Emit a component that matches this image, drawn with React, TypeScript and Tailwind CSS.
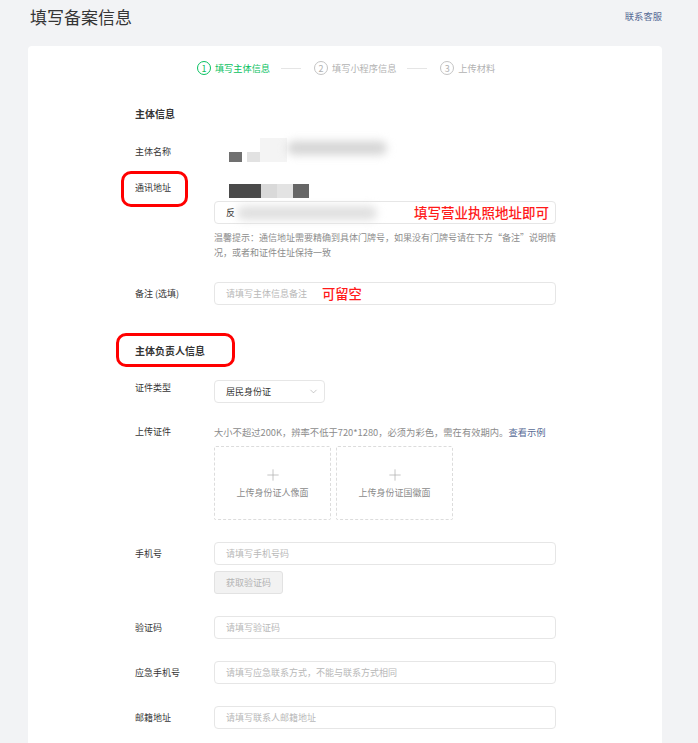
import { ChevronDown, Plus } from 'lucide-react';

const font = "font-['Noto_Sans_CJK_SC','Noto_Sans',sans-serif]";

function Step({ n, label, active }: { n: number; label: string; active?: boolean }) {
    return (
        <div className="flex items-center gap-[4px]">
            <span
                className={`flex h-[14px] w-[14px] items-center justify-center rounded-full border text-[9px] leading-none ${
                    active ? 'border-[#07c160] text-[#07c160]' : 'border-[#c4c4c4] text-[#b2b2b2]'
                }`}
            >
                {n}
            </span>
            <span className={`text-[9.2px] leading-[14px] ${active ? 'text-[#07c160]' : 'text-[#b2b2b2]'}`}>{label}</span>
        </div>
    );
}

function Input({ placeholder, children }: { placeholder?: string; children?: React.ReactNode }) {
    return (
        <div className="relative flex h-[23px] w-[342px] items-center rounded-[4px] border border-[#e6e6e6] bg-white pl-[11px]">
            {placeholder && <span className="text-[9px] text-[#b8b8b8]">{placeholder}</span>}
            {children}
        </div>
    );
}

function Row({ label, placeholder, className = 'mt-[22px]' }: { label: string; placeholder: string; className?: string }) {
    return (
        <div className={`flex items-center ${className}`}>
            <div className="w-[79px] text-[9px] leading-[14px] text-[#353535]">{label}</div>
            <Input placeholder={placeholder} />
        </div>
    );
}

function UploadBox({ text }: { text: string }) {
    return (
        <div className="flex h-[74px] w-[117px] flex-col items-center justify-center rounded-[2px] border border-dashed border-[#dcdcdc]">
            <Plus size={18} strokeWidth={1} className="text-[#b0b0b0]" />
            <span className="mt-[2px] text-[9px] text-[#8a8a8a]">{text}</span>
        </div>
    );
}

export default function App() {
    return (
        <div className={`min-h-[743px] w-[698px] overflow-hidden bg-[#f2f3f5] ${font}`}>
            <div className="flex h-[33px] items-center justify-between pl-[30px] pr-[36px]">
                <h1 className="text-[17px] leading-[22px] text-[#353535]">填写备案信息</h1>
                <span className="text-[9.3px] text-[#576b95]">联系客服</span>
            </div>

            <div className="ml-[28px] mt-[13px] w-[634px] rounded-[4px] bg-white pb-[40px] pt-[15px]">
                <div className="flex items-center justify-center pl-[2px]">
                    <Step n={1} label="填写主体信息" active />
                    <div className="ml-[11px] mr-[13px] h-px w-[20px] bg-[#e5e5e5]" />
                    <Step n={2} label="填写小程序信息" />
                    <div className="ml-[11px] mr-[13px] h-px w-[20px] bg-[#e5e5e5]" />
                    <Step n={3} label="上传材料" />
                </div>

                <div className="pl-[107px]">
                    <h3 className="mt-[32px] text-[10px] font-bold leading-[14px] text-[#353535]">主体信息</h3>

                    <div className="mt-[24px] flex items-start">
                        <div className="w-[79px] text-[9px] leading-[14px] text-[#353535]">主体名称</div>
                        <div className="relative h-[14px] w-[200px]">
                            <div className="absolute left-[15px] top-[7px] h-[10px] w-[13px] bg-[#707070]" />
                            <div className="absolute left-[33px] top-[7px] h-[10px] w-[13px] bg-[#e2e2e2]" />
                            <div className="absolute left-[46px] top-[-7px] h-[24px] w-[27px] bg-[#f4f4f4]" />
                            <div className="absolute left-[73px] top-[-4px] h-[14px] w-[100px] rounded-full bg-[#d6d6d6] blur-[4px]" />
                        </div>
                    </div>

                    <div className="mt-[22px] flex items-start">
                        <div className="relative w-[79px] text-[9px] leading-[14px] text-[#353535]">
                            通讯地址
                            <div className="absolute left-[-14px] top-[-10px] h-[36px] w-[67px] rounded-[10px] border-[3px] border-[#ff0000]" />
                        </div>
                        <div className="flex flex-col">
                            <div className="ml-[15px] mt-[3px] flex h-[14px]">
                                <div className="w-[32px] bg-[#4a4a4a]" />
                                <div className="w-[16px] bg-[#d9d9d9]" />
                                <div className="w-[16px] bg-[#e3e3e3]" />
                                <div className="w-[16px] bg-[#666666]" />
                            </div>
                            <div className="mt-[3px]">
                                <Input>
                                    <span className="text-[9px] text-[#353535]">反</span>
                                    <div className="ml-[2px] h-[14px] w-[140px] rounded-full bg-[#e0e0e0] blur-[4px]" />
                                    <span className="absolute left-[199px] top-1/2 -translate-y-1/2 text-[13.5px] font-medium leading-none text-[#ff1a1a]">
                                        填写营业执照地址即可
                                    </span>
                                </Input>
                            </div>
                            <p className="mt-[6px] w-[342px] text-[9px] leading-[15px] text-[#8c8c8c]">
                                温馨提示：通信地址需要精确到具体门牌号，如果没有门牌号请在下方“备注”说明情况，或者和证件住址保持一致
                            </p>
                        </div>
                    </div>

                    <div className="mt-[22px] flex items-center">
                        <div className="w-[79px] text-[9px] leading-[14px] text-[#353535]">备注 (选填)</div>
                        <Input placeholder="请填写主体信息备注">
                            <span className="absolute left-[106px] top-1/2 -translate-y-1/2 bg-white px-[1px] text-[13.3px] font-medium leading-none text-[#ff1a1a]">
                                可留空
                            </span>
                        </Input>
                    </div>

                    <h3 className="relative mt-[39px] text-[10px] font-bold leading-[14px] text-[#353535]">
                        主体负责人信息
                        <span className="absolute left-[-19px] top-[-11px] h-[34px] w-[119px] rounded-[10px] border-[3px] border-[#ff0000]" />
                    </h3>

                    <div className="mt-[22px] flex items-start">
                        <div className="w-[79px] pt-[1px] text-[9px] leading-[14px] text-[#353535]">证件类型</div>
                        <div className="flex h-[23px] w-[111px] items-center justify-between rounded-[4px] border border-[#e6e6e6] pl-[11px] pr-[5px]">
                            <span className="text-[9px] text-[#353535]">居民身份证</span>
                            <ChevronDown size={11} strokeWidth={1.2} className="text-[#9a9a9a]" />
                        </div>
                    </div>

                    <div className="mt-[22px] flex items-start">
                        <div className="w-[79px] text-[9px] leading-[14px] text-[#353535]">上传证件</div>
                        <div className="flex flex-col">
                            <p className="text-[9.3px] leading-[14px] text-[#8c8c8c]">
                                大小不超过200K，辨率不低于720*1280，必须为彩色，需在有效期内。
                                <span className="text-[#576b95]">查看示例</span>
                            </p>
                            <div className="mt-[7px] flex gap-[5px]">
                                <UploadBox text="上传身份证人像面" />
                                <UploadBox text="上传身份证国徽面" />
                            </div>
                        </div>
                    </div>

                    <div className="mt-[22px] flex items-start">
                        <div className="w-[79px] pt-[5px] text-[9px] leading-[14px] text-[#353535]">手机号</div>
                        <div className="flex flex-col">
                            <Input placeholder="请填写手机号码" />
                            <div className="mt-[6px] flex h-[23px] w-[69px] items-center justify-center rounded-[3px] border border-[#e2e2e2] bg-[#f2f2f2] text-[9px] text-[#b2b2b2]">
                                获取验证码
                            </div>
                        </div>
                    </div>

                    <Row label="验证码" placeholder="请填写验证码" />
                    <Row label="应急手机号" placeholder="请填写应急联系方式，不能与联系方式相同" />
                    <Row label="邮籍地址" placeholder="请填写联系人邮籍地址" />
                </div>
            </div>
        </div>
    );
}
